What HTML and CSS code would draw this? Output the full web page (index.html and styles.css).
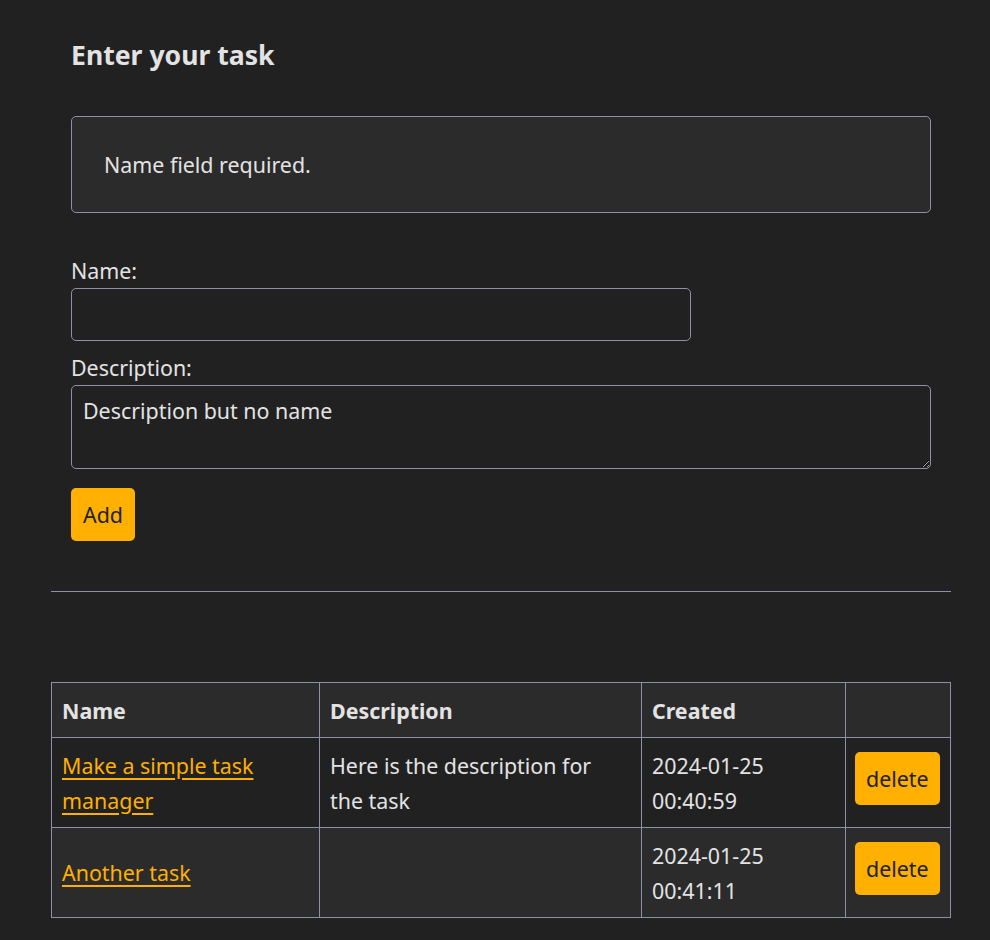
FILE: index.html
```html
<!DOCTYPE html>
<html>
<head>
<meta charset="utf-8">
<link rel="stylesheet" href="styles.css">
</head>
<body>
<div class="container">
  <section class="form-section">
    <h2 class="title">Enter your task</h2>
    <div class="alert">Name field required.</div>
    <form class="task-form">
      <label class="label" for="name">Name:</label>
      <input class="input" id="name" type="text">
      <label class="label" for="desc">Description:</label>
      <textarea class="textarea" id="desc" rows="2">Description but no name</textarea>
      <div class="actions"><button class="btn" type="button">Add</button></div>
    </form>
  </section>
  <hr class="divider">
  <table class="tasks">
    <colgroup>
      <col class="c-name"><col class="c-desc"><col class="c-created"><col class="c-act">
    </colgroup>
    <thead>
      <tr><th>Name</th><th class="desc">Description</th><th>Created</th><th></th></tr>
    </thead>
    <tbody>
      <tr>
        <td><a href="#" class="link">Make a simple task manager</a></td>
        <td class="desc">Here is the description for the task</td>
        <td>2024-01-25 00:40:59</td>
        <td class="act"><button class="btn" type="button">delete</button></td>
      </tr>
      <tr class="alt">
        <td><a href="#" class="link">Another task</a></td>
        <td class="desc"></td>
        <td>2024-01-25 00:41:11</td>
        <td class="act"><button class="btn" type="button">delete</button></td>
      </tr>
    </tbody>
  </table>
</div>
</body>
</html>
```

FILE: styles.css
```css
* { box-sizing: border-box; }
html, body {
  margin: 0;
  background: #212121;
}
body {
  font-family: "Noto Sans", "Open Sans", sans-serif;
  font-size: 21.4px;
  line-height: 35px;
  color: #e3e3e3;
}
.container {
  width: 900px;
  margin-left: 51px;
  padding-top: 33px;
}
.form-section {
  padding: 0 20px;
}
.title {
  margin: 0;
  font-size: 26.6px;
  line-height: 44px;
  font-weight: 700;
  color: #e3e3e3;
}
.alert {
  margin-top: 39px;
  border: 1px solid #8e90a8;
  border-radius: 5px;
  background: #2b2b2b;
  padding: 30px 32px;
}
.task-form {
  display: flex;
  flex-direction: column;
  align-items: flex-start;
  margin-top: 40px;
}
.label {
  display: block;
}
.input {
  width: 620px;
  height: 53px;
  margin: 0 0 9px 0;
  border: 1px solid #8e90a8;
  border-radius: 5px;
  background: #212121;
  color: #e3e3e3;
  font: inherit;
  padding: 8px 11px;
}
.textarea {
  width: 100%;
  height: 84px;
  border: 1px solid #8e90a8;
  border-radius: 5px;
  background: #212121;
  color: #e3e3e3;
  font: inherit;
  line-height: 35px;
  padding: 7px 11px 6px;
  margin: 0;
  resize: vertical;
}
.actions {
  margin-top: 19px;
}
.btn {
  font: inherit;
  line-height: 35px;
  background: #ffb000;
  color: #222;
  border: none;
  border-radius: 5px;
  padding: 9px 12px;
  cursor: pointer;
}
.divider {
  margin: 50px 0 0 0;
  border: none;
  border-top: 1px solid #8e90a8;
  height: 0;
}
.tasks {
  margin-top: 90px;
  width: 899px;
  border-collapse: collapse;
  table-layout: fixed;
}
.tasks th, .tasks td {
  border: 1px solid #8e90a8;
  padding: 9.5px 10px;
  text-align: left;
  vertical-align: middle;
}
.tasks th {
  font-weight: 700;
  background: #2b2b2b;
}
.c-name { width: 268px; }
.c-desc { width: 322px; }
.c-created { width: 204px; }
.c-act { width: 105px; }
.tasks td.desc { padding-right: 18px; }
.tasks .alt td { background: #2b2b2b; }
.link {
  color: #ffb000;
  text-decoration: underline;
  text-underline-offset: 4px;
}
.tasks td.act {
  vertical-align: top;
  padding: 9.5px 9px;
}
.tasks td.act .btn {
  margin-top: 4px;
  padding: 9px 11px;
}
```
